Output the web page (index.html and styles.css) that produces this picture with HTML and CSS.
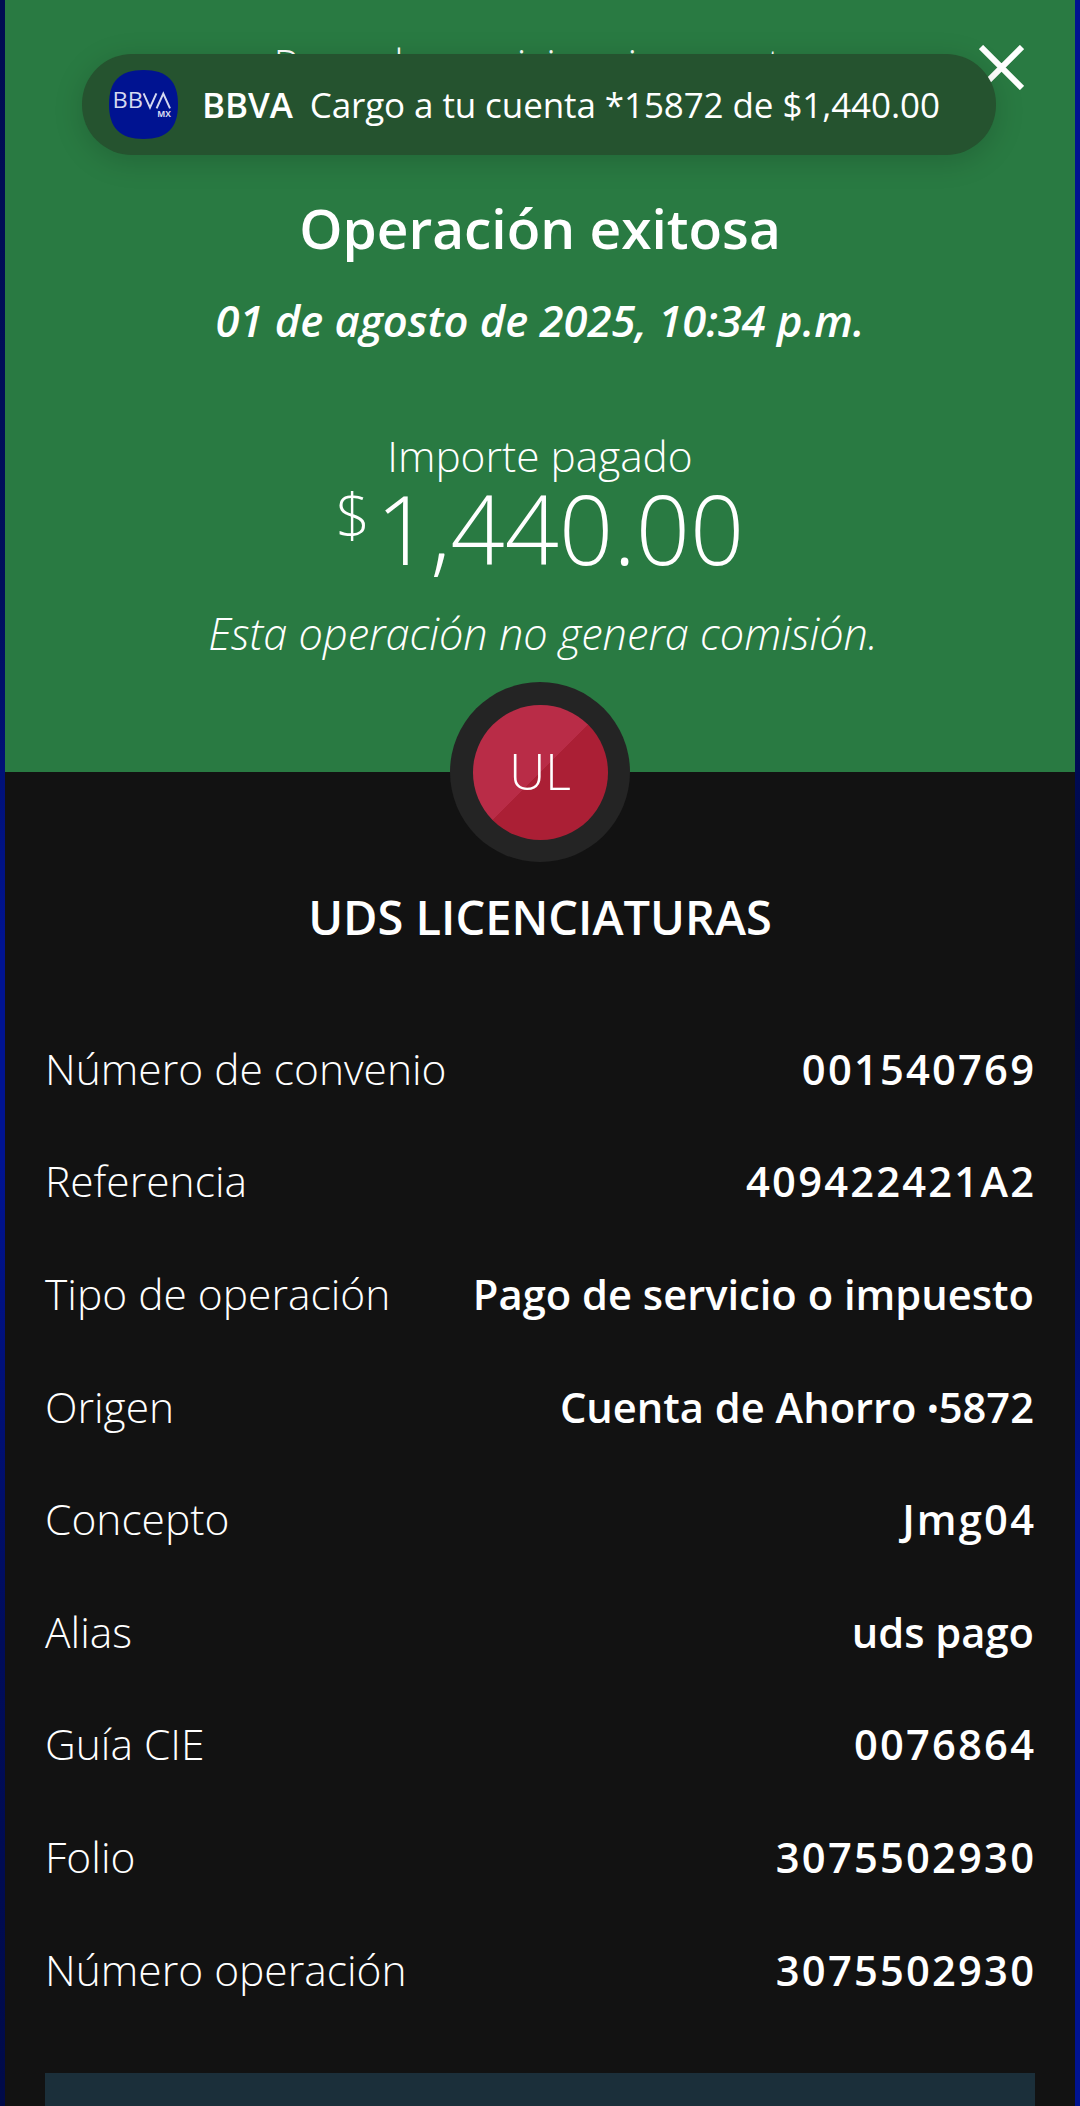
FILE: index.html
```html
<!DOCTYPE html>
<html lang="es">
<head>
<meta charset="utf-8">
<title>Operación exitosa</title>
<link rel="stylesheet" href="styles.css">
</head>
<body>
<main class="screen">
  <section class="hero">
    <p class="hero-top">Pago de servicio o impuesto</p>
    <h1 class="hero-title">Operación exitosa</h1>
    <p class="hero-date">01 de agosto de 2025, 10:34 p.m.</p>
    <p class="hero-label">Importe pagado</p>
    <p class="hero-amount"><span class="currency">$</span>1,440.00</p>
    <p class="hero-note">Esta operación no genera comisión.</p>
  </section>
  <section class="details">
    <div class="avatar-ring"><div class="avatar">UL</div></div>
    <h2 class="merchant">UDS LICENCIATURAS</h2>
    <dl class="rows">
      <div class="row"><dt>Número de convenio</dt><dd class="num">001540769</dd></div>
      <div class="row"><dt>Referencia</dt><dd class="num">409422421A2</dd></div>
      <div class="row"><dt>Tipo de operación</dt><dd>Pago de servicio o impuesto</dd></div>
      <div class="row"><dt>Origen</dt><dd>Cuenta de Ahorro <span class="dot">•</span>5872</dd></div>
      <div class="row"><dt>Concepto</dt><dd class="num">Jmg04</dd></div>
      <div class="row"><dt>Alias</dt><dd>uds pago</dd></div>
      <div class="row"><dt>Guía CIE</dt><dd class="num">0076864</dd></div>
      <div class="row"><dt>Folio</dt><dd class="num">3075502930</dd></div>
      <div class="row"><dt>Número operación</dt><dd class="num">3075502930</dd></div>
    </dl>
    <div class="banner"></div>
  </section>
</main>
<svg class="close" viewBox="0 0 45 45" aria-hidden="true">
  <path d="M2 2 43 43M43 2 2 43" fill="none" stroke="#fff" stroke-width="6"/>
</svg>
<div class="toast">
  <svg class="toast-icon" viewBox="0 0 69 69" aria-hidden="true">
    <path d="M34.5 0C58 0 69 11 69 34.5S58 69 34.5 69 0 58 0 34.5 11 0 34.5 0Z" fill="#001391"/>
    <text class="toast-bb" x="3.4" y="38.3" textLength="30.5" lengthAdjust="spacingAndGlyphs">BB</text>
    <path d="M34.6 23.4 41 37.6 47.4 23.4M47.6 38.3 54.3 23.6 61 38.3" fill="none" stroke="#d5d9f0" stroke-width="2"/>
    <text class="toast-mx" x="62" y="47" text-anchor="end">MX</text>
  </svg>
  <span class="toast-text"><b>BBVA</b><span class="toast-msg">Cargo a tu cuenta *15872 de $1,440.00</span></span>
</div>
</body>
</html>
```
FILE: styles.css
```css
* { box-sizing: border-box; }
html, body { margin: 0; padding: 0; }
body {
  width: 1080px;
  height: 2106px;
  overflow: hidden;
  background-color: #000c5a;
  background-image:
    linear-gradient(180deg, #000c52 0%, #000f5c 28%, #001391 45%, #001391 55%, #000c5a 78%, #000a48 100%),
    linear-gradient(180deg, #001391 0%, #001391 22%, #000c5a 33%, #000840 48%, #000c5a 58%, #001391 72%, #001391 100%);
  background-size: 5px 100%, 5px 100%;
  background-position: left top, right top;
  background-repeat: no-repeat;
  font-family: "Open Sans", "Liberation Sans", sans-serif;
  color: #fff;
  position: relative;
}
p, h1, h2, dl, dd, dt { margin: 0; }
.screen {
  margin: 0 5px;
  height: 2106px;
  background: #121212;
}
.hero {
  height: 772px;
  background: #297a42;
  text-align: center;
  padding-top: 39px;
}
.hero-top { font-size: 42.3px; font-weight: 300; line-height: 50px; }
.hero-title { font-size: 55px; font-weight: 600; line-height: 64px; margin-top: 107px; }
.hero-date { font-size: 43.5px; font-weight: 600; font-style: italic; line-height: 50px; margin-top: 36px; }
.hero-label { font-size: 42.4px; font-weight: 300; line-height: 50px; margin-top: 85px; }
.hero-amount { font-size: 95px; font-weight: 300; line-height: 68px; }
.currency { font-size: 60px; vertical-align: 27px; margin-right: 6px; }
.hero-note { font-size: 43.3px; font-weight: 300; font-style: italic; line-height: 50px; margin-top: 47px; padding-left: 6px; }
.details { position: relative; padding: 0 40px; }
.avatar-ring {
  position: absolute;
  left: 445px;
  top: -90px;
  width: 180px;
  height: 180px;
  border-radius: 50%;
  background: #242424;
  display: flex;
  align-items: center;
  justify-content: center;
}
.avatar {
  width: 135px;
  height: 135px;
  border-radius: 50%;
  background: linear-gradient(135deg, #b92c47 50%, #ab1f35 50%);
  display: flex;
  align-items: center;
  justify-content: center;
  padding-bottom: 3px;
  font-size: 50px;
  font-weight: 300;
}
.merchant {
  padding-top: 115px;
  text-align: center;
  font-size: 47px;
  font-weight: 600;
  line-height: 60px;
}
.rows { margin-top: 65px; padding-right: 1px; }
.row {
  height: 112.6px;
  display: flex;
  align-items: center;
  justify-content: space-between;
  font-size: 42.5px;
}
.row dt { font-weight: 300; }
.row dd { font-size: 41.7px; font-weight: 600; }
.row dd.num { letter-spacing: 2.2px; margin-right: -2.2px; }
.dot { font-size: 30px; vertical-align: 3px; }
.banner {
  position: absolute;
  left: 40px;
  right: 40px;
  top: 1301px;
  height: 40px;
  background: #1b2f3a;
}
.toast {
  position: absolute;
  left: 82px;
  top: 54px;
  width: 914px;
  height: 101px;
  border-radius: 50px;
  background: #25532f;
  box-shadow: 0 6px 30px rgba(0, 0, 0, 0.16);
  display: flex;
  align-items: center;
  padding-left: 27px;
  gap: 24px;
}
.toast-icon { width: 69px; height: 69px; flex: none; }
.toast-bb { font: 400 21px "Open Sans", sans-serif; fill: #d5d9f0; }
.toast-mx { font: 700 8.5px "Open Sans", sans-serif; fill: #d5d9f0; }
.toast-text { font-size: 35px; white-space: nowrap; letter-spacing: -0.1px; }
.toast-text b { font-weight: 600; margin-right: 17px; }
.toast-msg { font-weight: 400; }
.close {
  position: absolute;
  left: 979px;
  top: 45px;
  width: 45px;
  height: 45px;
}
```
